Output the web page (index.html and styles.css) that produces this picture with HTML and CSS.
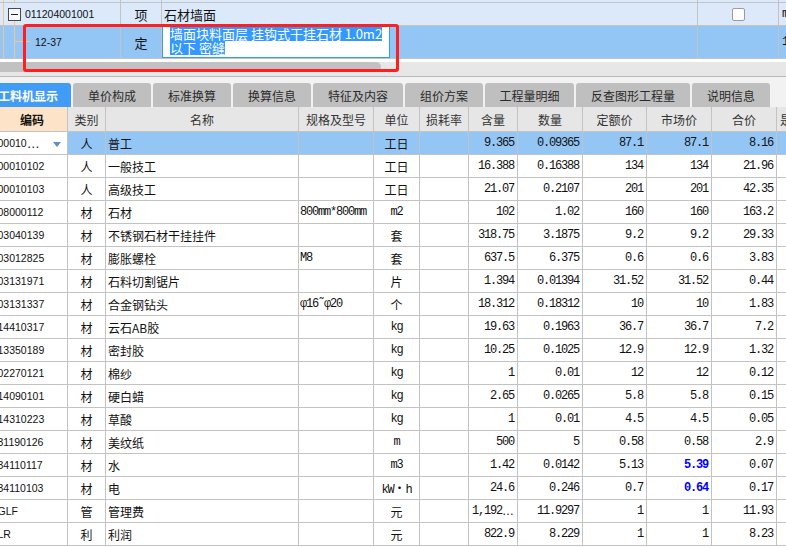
FILE: index.html
```html
<!DOCTYPE html>
<html>
<head>
<meta charset="utf-8">
<link rel="stylesheet" href="styles.css">
</head>
<body>
<div class="app">
  <div class="top">
    <div class="trow r0">
      <div class="tc tc1"><span class="tl tl-a"></span><span class="tl tl-b"></span></div>
      <div class="tc tc2"></div>
      <div class="tc tc3"></div>
      <div class="tc tc4"></div>
      <div class="tc tc5"></div>
    </div>
    <div class="trow r1">
      <div class="tc tc1"><span class="tl tl-a"></span><span class="tl tl-low"></span><span class="tbox"><span class="minus"></span></span><span class="bcode">011204001001</span></div>
      <div class="tc tc2">项</div>
      <div class="tc tc3"><span class="bname">石材墙面</span></div>
      <div class="tc tc4"><span class="chk"></span></div>
      <div class="tc tc5"><span class="edge">m</span></div>
    </div>
    <div class="trow r2">
      <div class="tc tc1"><span class="tl tl-a"></span><span class="tl tl-b"></span><span class="tl tl-h"></span><span class="dcode">12-37</span></div>
      <div class="tc tc2">定</div>
      <div class="tc tc3">
        <div class="edit">
          <div class="eline"><span class="sel">墙面块料面层 挂钩式干挂石材 1.0m2</span></div>
          <div class="eline"><span class="sel">以下 密缝</span></div>
        </div>
      </div>
      <div class="tc tc4"></div>
      <div class="tc tc5"><span class="edge">1</span></div>
    </div>
    <div class="gapw"></div>
    <div class="hscroll"><div class="thumb"></div></div>
  </div>
  <div class="sep"></div>
  <div class="tabs">
    <div class="tab active">工料机显示</div>
    <div class="tab">单价构成</div>
    <div class="tab">标准换算</div>
    <div class="tab">换算信息</div>
    <div class="tab w90">特征及内容</div>
    <div class="tab">组价方案</div>
    <div class="tab w89">工程量明细</div>
    <div class="tab w114">反查图形工程量</div>
    <div class="tab">说明信息</div>
  </div>
  <div class="grid">
    <div class="c h hcode">编码</div><div class="c h">类别</div><div class="c h">名称</div><div class="c h">规格及型号</div><div class="c h">单位</div><div class="c h">损耗率</div><div class="c h">含量</div><div class="c h">数量</div><div class="c h">定额价</div><div class="c h">市场价</div><div class="c h">合价</div><div class="c h hl">是否暂估</div>

    <div class="c code combo">00010<span class="ell">…</span><span class="tri"></span></div><div class="c cat s">人</div><div class="c name s">普工</div><div class="c spec s"></div><div class="c unit s">工日</div><div class="c s"></div><div class="c num s">9.365</div><div class="c num s">0.09365</div><div class="c num s">87.1</div><div class="c num s">87.1</div><div class="c num s">8.16</div><div class="c s"></div>

    <div class="c code">00010102</div><div class="c cat">人</div><div class="c name">一般技工</div><div class="c spec"></div><div class="c unit">工日</div><div class="c"></div><div class="c num">16.388</div><div class="c num">0.16388</div><div class="c num">134</div><div class="c num">134</div><div class="c num">21.96</div><div class="c"></div>

    <div class="c code">00010103</div><div class="c cat">人</div><div class="c name">高级技工</div><div class="c spec"></div><div class="c unit">工日</div><div class="c"></div><div class="c num">21.07</div><div class="c num">0.2107</div><div class="c num">201</div><div class="c num">201</div><div class="c num">42.35</div><div class="c"></div>

    <div class="c code">08000112</div><div class="c cat">材</div><div class="c name">石材</div><div class="c spec">800mm*800mm</div><div class="c unit"><span class="mono">m2</span></div><div class="c"></div><div class="c num">102</div><div class="c num">1.02</div><div class="c num">160</div><div class="c num">160</div><div class="c num">163.2</div><div class="c"></div>

    <div class="c code">03040139</div><div class="c cat">材</div><div class="c name">不锈钢石材干挂挂件</div><div class="c spec"></div><div class="c unit">套</div><div class="c"></div><div class="c num">318.75</div><div class="c num">3.1875</div><div class="c num">9.2</div><div class="c num">9.2</div><div class="c num">29.33</div><div class="c"></div>

    <div class="c code">03012825</div><div class="c cat">材</div><div class="c name">膨胀螺栓</div><div class="c spec">M8</div><div class="c unit">套</div><div class="c"></div><div class="c num">637.5</div><div class="c num">6.375</div><div class="c num">0.6</div><div class="c num">0.6</div><div class="c num">3.83</div><div class="c"></div>

    <div class="c code">03131971</div><div class="c cat">材</div><div class="c name">石料切割锯片</div><div class="c spec"></div><div class="c unit">片</div><div class="c"></div><div class="c num">1.394</div><div class="c num">0.01394</div><div class="c num">31.52</div><div class="c num">31.52</div><div class="c num">0.44</div><div class="c"></div>

    <div class="c code">03131337</div><div class="c cat">材</div><div class="c name">合金钢钻头</div><div class="c spec">φ16˜φ20</div><div class="c unit">个</div><div class="c"></div><div class="c num">18.312</div><div class="c num">0.18312</div><div class="c num">10</div><div class="c num">10</div><div class="c num">1.83</div><div class="c"></div>

    <div class="c code">14410317</div><div class="c cat">材</div><div class="c name">云石AB胶</div><div class="c spec"></div><div class="c unit"><span class="mono">kg</span></div><div class="c"></div><div class="c num">19.63</div><div class="c num">0.1963</div><div class="c num">36.7</div><div class="c num">36.7</div><div class="c num">7.2</div><div class="c"></div>

    <div class="c code">13350189</div><div class="c cat">材</div><div class="c name">密封胶</div><div class="c spec"></div><div class="c unit"><span class="mono">kg</span></div><div class="c"></div><div class="c num">10.25</div><div class="c num">0.1025</div><div class="c num">12.9</div><div class="c num">12.9</div><div class="c num">1.32</div><div class="c"></div>

    <div class="c code">02270121</div><div class="c cat">材</div><div class="c name">棉纱</div><div class="c spec"></div><div class="c unit"><span class="mono">kg</span></div><div class="c"></div><div class="c num">1</div><div class="c num">0.01</div><div class="c num">12</div><div class="c num">12</div><div class="c num">0.12</div><div class="c"></div>

    <div class="c code">14090101</div><div class="c cat">材</div><div class="c name">硬白蜡</div><div class="c spec"></div><div class="c unit"><span class="mono">kg</span></div><div class="c"></div><div class="c num">2.65</div><div class="c num">0.0265</div><div class="c num">5.8</div><div class="c num">5.8</div><div class="c num">0.15</div><div class="c"></div>

    <div class="c code">14310223</div><div class="c cat">材</div><div class="c name">草酸</div><div class="c spec"></div><div class="c unit"><span class="mono">kg</span></div><div class="c"></div><div class="c num">1</div><div class="c num">0.01</div><div class="c num">4.5</div><div class="c num">4.5</div><div class="c num">0.05</div><div class="c"></div>

    <div class="c code">31190126</div><div class="c cat">材</div><div class="c name">美纹纸</div><div class="c spec"></div><div class="c unit"><span class="mono">m</span></div><div class="c"></div><div class="c num">500</div><div class="c num">5</div><div class="c num">0.58</div><div class="c num">0.58</div><div class="c num">2.9</div><div class="c"></div>

    <div class="c code">34110117</div><div class="c cat">材</div><div class="c name">水</div><div class="c spec"></div><div class="c unit"><span class="mono">m3</span></div><div class="c"></div><div class="c num">1.42</div><div class="c num">0.0142</div><div class="c num">5.13</div><div class="c num blue">5.39</div><div class="c num">0.07</div><div class="c"></div>

    <div class="c code">34110103</div><div class="c cat">材</div><div class="c name">电</div><div class="c spec"></div><div class="c unit"><span class="mono">kW<span class="dot">・</span>h</span></div><div class="c"></div><div class="c num">24.6</div><div class="c num">0.246</div><div class="c num">0.7</div><div class="c num blue">0.64</div><div class="c num">0.17</div><div class="c"></div>

    <div class="c code">GLF</div><div class="c cat">管</div><div class="c name">管理费</div><div class="c spec"></div><div class="c unit">元</div><div class="c"></div><div class="c num">1,192<span class="ell">…</span></div><div class="c num">11.9297</div><div class="c num">1</div><div class="c num">1</div><div class="c num">11.93</div><div class="c"></div>

    <div class="c code">LR</div><div class="c cat">利</div><div class="c name">利润</div><div class="c spec"></div><div class="c unit">元</div><div class="c"></div><div class="c num">822.9</div><div class="c num">8.229</div><div class="c num">1</div><div class="c num">1</div><div class="c num">8.23</div><div class="c"></div>
  </div>
  <div class="redbox"></div>
</div>
</body>
</html>
```

FILE: styles.css
```css
html, body {
  margin: 0;
  padding: 0;
}
body {
  width: 786px;
  height: 547px;
  overflow: hidden;
  background: #ffffff;
  font-family: "Noto Sans CJK SC", "Liberation Sans", sans-serif;
  color: #111;
}
.app {
  position: relative;
  width: 786px;
  height: 547px;
  overflow: hidden;
}

/* ---------- top grid ---------- */
.trow {
  display: flex;
  background: #dce9fb;
  border-bottom: 1px solid #c3c3c3;
}
.r0 { height: 2px; }
.r1 { height: 22px; }
.r2 { height: 32px; background: #94c6f5; }
.tc {
  flex: none;
  position: relative;
  display: flex;
  align-items: center;
  border-right: 1px solid #c3c3c3;
  font-size: 13px;
  box-sizing: content-box;
}
.tc1 { width: 120px; }
.tc2 { width: 40px; justify-content: center; }
.tc3 { width: 535px; align-items: stretch; }
.r1 .tc3 { align-items: center; }
.tc4 { width: 80px; justify-content: center; }
.tc5 { flex: 1; border-right: 0; }

.tl { position: absolute; background: #f0c88f; }
.tl-a { left: 3px; top: 0; bottom: 0; width: 1px; }
.tl-b { left: 14px; top: 0; bottom: 0; width: 1px; }
.tl-low { left: 14px; top: 17px; bottom: 0; width: 1px; }
.tl-h { left: 14px; top: 15px; width: 16px; height: 1px; }

.tbox {
  position: relative;
  margin-left: 8px;
  width: 11px;
  height: 11px;
  border: 1px solid #4a4a4a;
  background: #f6f9fe;
  display: flex;
  align-items: center;
  justify-content: center;
}
.minus { width: 7px; height: 1px; background: #222; }
.bcode {
  margin-left: 4px;
  font-family: "Liberation Sans", sans-serif;
  font-size: 10.5px;
  color: #111;
}
.dcode {
  margin-left: 35px;
  font-family: "Liberation Sans", sans-serif;
  font-size: 10.5px;
  color: #111;
}
.bname { margin-left: 2px; }
.chk {
  width: 11px;
  height: 11px;
  border: 1px solid #9a9a9a;
  border-radius: 2px;
  background: #fff;
}
.edge {
  margin-left: 3px;
  font-family: "Liberation Mono", monospace;
  font-size: 12px;
}
.edit {
  width: 219px;
  background: #fff;
  border: 1px solid #3399ff;
  border-top-color: #fff;
  padding: 0 0 0 7px;
  box-sizing: content-box;
}
.eline {
  height: 14px;
  line-height: 14px;
}
.eline:first-child { margin-top: 0; }
.sel {
  display: inline-block;
  height: 14px;
  line-height: 14px;
  background: #3399ff;
  color: #fff;
  font-size: 13px;
  white-space: nowrap;
}

.gapw { height: 3px; background: #fff; }
.hscroll { height: 14px; background: #e7e7e7; }
.thumb {
  width: 381px;
  height: 10px;
  background: #c1c1c1;
  border-radius: 0 5px 5px 0;
}
.sep { height: 1px; background: #b9b9b9; }

/* ---------- tabs ---------- */
.tabs {
  display: flex;
  gap: 2px;
  height: 24px;
  padding-top: 6px;
  margin-left: -8px;
  background: #f2f2f2;
}
.tab {
  flex: none;
  width: 78px;
  height: 24px;
  border-radius: 3px 3px 0 0;
  background: #bfbfbf;
  color: #2a2a2a;
  font-size: 12px;
  display: flex;
  align-items: center;
  justify-content: center;
}
.tab.active {
  width: 79px;
  box-sizing: border-box;
  padding-right: 7px;
  background: #419cf8;
  color: #fff;
  font-weight: bold;
}
.tab.w90 { width: 90px; }
.tab.w89 { width: 89px; }
.tab.w114 { width: 114px; }

/* ---------- material grid ---------- */
.grid {
  display: grid;
  grid-template-columns: 71px 38px 193px 75px 46px 49px 49px 65px 64px 65px 65px 60px;
  grid-template-rows: 25px;
  grid-auto-rows: 23px;
  margin-left: -3px;
  width: 840px;
}
.c {
  box-sizing: border-box;
  border-right: 1px solid #c3c3c3;
  border-bottom: 1px solid #c3c3c3;
  display: flex;
  align-items: center;
  overflow: hidden;
  white-space: nowrap;
  font-size: 12px;
  color: #111;
  min-width: 0;
}
.h {
  background: #e6e6e6;
  justify-content: center;
  color: #333;
}
.hcode {
  background: #fde4c8;
  font-weight: bold;
  color: #111;
}
.hl { justify-content: flex-start; padding-left: 3px; }
.code {
  font-family: "Liberation Sans", sans-serif;
  font-size: 10.5px;
  padding-left: 0.5px;
}
.combo { background: #fff; }
.combo .ell { font-size: 13px; letter-spacing: 0; }
.tri {
  margin-left: auto;
  margin-right: 6px;
  margin-top: 2px;
  width: 0;
  height: 0;
  border-left: 4px solid transparent;
  border-right: 4px solid transparent;
  border-top: 5px solid #5b8fca;
}
.cat { justify-content: center; }
.name { padding-left: 2px; }
.spec {
  padding-left: 1px;
  font-family: "Liberation Mono", "Noto Sans CJK SC", monospace;
  letter-spacing: -1.2px;
}
.unit { justify-content: center; }
.mono {
  font-family: "Liberation Mono", "Noto Sans CJK SC", monospace;
  letter-spacing: -1.2px;
}
.dot { font-family: "Noto Sans CJK SC", sans-serif; letter-spacing: 0; }
.num {
  justify-content: flex-end;
  padding-right: 3px;
  font-family: "Liberation Mono", monospace;
  letter-spacing: -1.2px;
}
.num .ell {
  font-family: "Liberation Sans", sans-serif;
  letter-spacing: 0;
  font-size: 12px;
}
.blue { color: #0000ff; font-weight: bold; }
.s { background: #94c6f5; }

.redbox {
  position: absolute;
  left: 23px;
  top: 24px;
  width: 376px;
  height: 48px;
  box-sizing: border-box;
  border: 3px solid #ff1f1f;
  border-radius: 3px;
}
```
